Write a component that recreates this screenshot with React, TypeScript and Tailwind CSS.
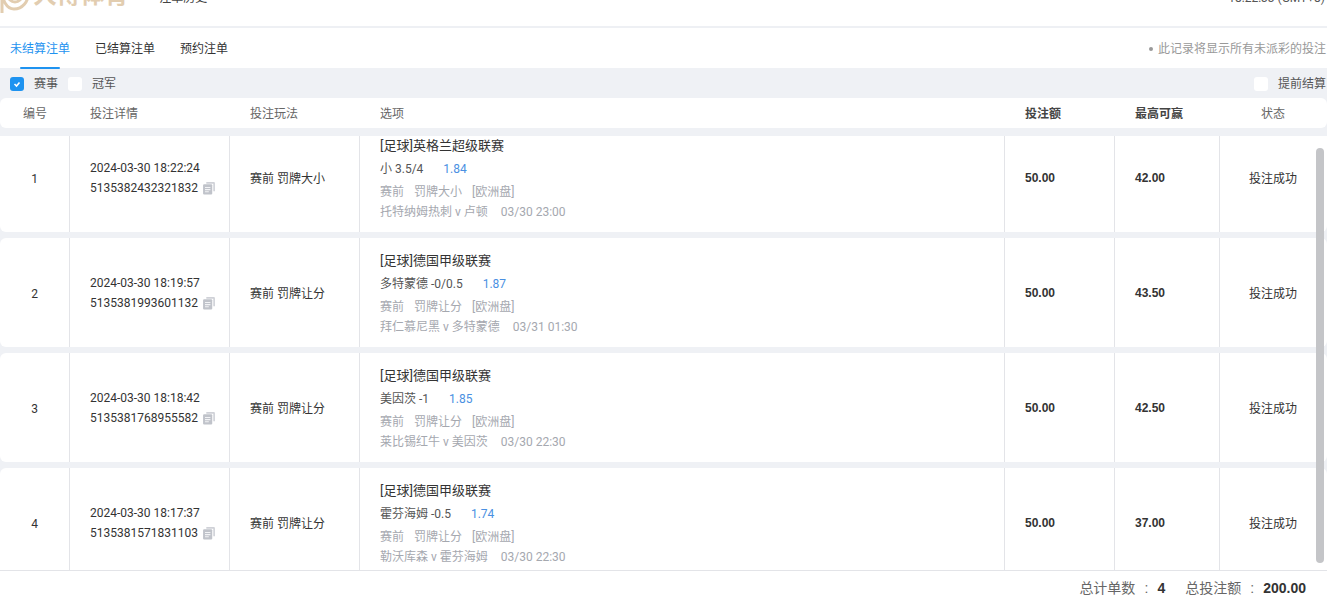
import React from "react";

const rows = [
  { n: 1, t: "2024-03-30 18:22:24", id: "5135382432321832", play: "赛前 罚牌大小", league: "[足球]英格兰超级联赛", pick: "小 3.5/4", odds: "1.84", sub: "罚牌大小", match: "托特纳姆热刺 v 卢顿", date: "03/30 23:00", win: "42.00" },
  { n: 2, t: "2024-03-30 18:19:57", id: "5135381993601132", play: "赛前 罚牌让分", league: "[足球]德国甲级联赛", pick: "多特蒙德 -0/0.5", odds: "1.87", sub: "罚牌让分", match: "拜仁慕尼黑 v 多特蒙德", date: "03/31 01:30", win: "43.50" },
  { n: 3, t: "2024-03-30 18:18:42", id: "5135381768955582", play: "赛前 罚牌让分", league: "[足球]德国甲级联赛", pick: "美因茨 -1", odds: "1.85", sub: "罚牌让分", match: "莱比锡红牛 v 美因茨", date: "03/30 22:30", win: "42.50" },
  { n: 4, t: "2024-03-30 18:17:37", id: "5135381571831103", play: "赛前 罚牌让分", league: "[足球]德国甲级联赛", pick: "霍芬海姆 -0.5", odds: "1.74", sub: "罚牌让分", match: "勒沃库森 v 霍芬海姆", date: "03/30 22:30", win: "37.00" },
];

const Copy = () => (
  <svg width="14" height="14" viewBox="0 0 13 13" className="ml-[4px] shrink-0">
    <path d="M4 1h7a1 1 0 0 1 1 1v7.5h-1.5V2.5H4z" fill="#cfd1d7" />
    <rect x="1" y="3" width="8.5" height="9.5" rx="1" fill="#c0c3ca" />
    <path d="M2.8 6h5M2.8 8h5M2.8 10h3.5" stroke="#f2f3f5" strokeWidth="1" />
  </svg>
);

const Check = ({ on }: { on?: boolean }) => (
  <span className={`flex h-[14px] w-[14px] items-center justify-center rounded-[3px] ${on ? "bg-[#1e93f0]" : "bg-white"}`}>
    {on && (
      <svg width="10" height="10" viewBox="0 0 10 10">
        <path d="M2.5 5l2 2 3-3.6" fill="none" stroke="#fff" strokeWidth="1.6" />
      </svg>
    )}
  </span>
);

export default function App() {
  return (
    <div className="flex h-[600px] w-[1327px] flex-col overflow-hidden bg-white text-[12px] leading-none text-[#333] [font-family:Roboto,'Noto_Sans_CJK_SC',sans-serif]">
      <header className="flex h-[28px] shrink-0 items-start justify-between overflow-hidden border-b-2 border-[#eef0f4]">
        <div className="flex items-start">
          <svg width="32" height="40" viewBox="0 0 32 40" className="-ml-[2px] -mt-[25px] shrink-0">
            <path d="M4 12v26M4 14c0 12 5 20 12 20 9 0 14-8 14-14" fill="none" stroke="#e2cdb0" strokeWidth="3" />
            <circle cx="17" cy="20" r="7" fill="none" stroke="#e2cdb0" strokeWidth="3" />
          </svg>
          <span className="-mt-[17px] ml-[3px] whitespace-nowrap text-[24px] font-bold leading-[24px] tracking-[-0.2px] text-[#e2cdb0]">大博体育</span>
          <span className="-mt-[8px] ml-[31px] whitespace-nowrap text-[12px] text-[#444]">注单历史</span>
        </div>
        <span className="-mt-[8px] mr-[2px] whitespace-nowrap text-[#555]">18:22:33 (GMT+8)</span>
      </header>

      <nav className="relative flex h-[40px] shrink-0 items-center justify-between pl-[10px] pt-[2px]">
        <div className="flex gap-[25px]">
          <span className="relative text-[#1e93f0]">
            未结算注单
            <span className="absolute left-[10px] top-[24px] h-[2px] w-[40px] rounded-sm bg-[#1e93f0]" />
          </span>
          <span>已结算注单</span>
          <span>预约注单</span>
        </div>
        <span className="flex items-center whitespace-nowrap pr-[1px] text-[#999]">
          <span className="mr-[5px] h-[4px] w-[4px] rounded-full bg-[#999]" />
          此记录将显示所有未派彩的投注
        </span>
      </nav>

      <div className="flex min-h-0 flex-1 flex-col bg-[#eff1f5]">
        <div className="flex h-[30px] shrink-0 items-center justify-between pl-[10px] pt-[2px]">
          <div className="flex items-center text-[#555]">
            <Check on />
            <span className="ml-[10px]">赛事</span>
            <span className="ml-[10px]"><Check /></span>
            <span className="ml-[10px]">冠军</span>
          </div>
          <div className="flex items-center pr-[1px] text-[#555]">
            <Check />
            <span className="ml-[10px]">提前结算</span>
          </div>
        </div>

        <div className="flex h-[30px] shrink-0 items-center rounded-[6px] bg-white pt-[1px] text-[#666]">
          <div className="w-[70px] text-center">编号</div>
          <div className="w-[160px] pl-[20px]">投注详情</div>
          <div className="w-[130px] pl-[20px]">投注玩法</div>
          <div className="w-[645px] pl-[20px]">选项</div>
          <div className="w-[110px] pl-[20px] font-bold text-[#444]">投注额</div>
          <div className="w-[105px] pl-[20px] font-bold text-[#444]">最高可赢</div>
          <div className="flex-1 pr-[1px] text-center">状态</div>
        </div>

        <div className="relative mt-[8px] min-h-0 flex-1 overflow-hidden">
          <div className="-mt-[13px] flex flex-col gap-[6px]">
            {rows.map((r) => (
              <div key={r.n} className="flex h-[109px] shrink-0 items-stretch rounded-[6px] bg-white">
                <div className="flex w-[70px] items-center justify-center border-r border-[#e3e4e8] pt-[2px]">{r.n}</div>
                <div className="flex w-[160px] flex-col justify-center gap-[8px] border-r border-[#e3e4e8] pl-[20px] pt-[1px]">
                  <div>{r.t}</div>
                  <div className="flex h-[12px] items-center">{r.id}<Copy /></div>
                </div>
                <div className="flex w-[130px] items-center border-r border-[#e3e4e8] pl-[20px] pt-[2px] text-[#333]">{r.play}</div>
                <div className="flex w-[645px] flex-col justify-center border-r border-[#e3e4e8] pl-[20px] pt-[1px]">
                  <div className="text-[13px] text-[#333]">{r.league}</div>
                  <div className="mt-[11px] flex text-[#555]">
                    <span>{r.pick}</span>
                    <span className="ml-[20px] text-[#4a90e2]">{r.odds}</span>
                  </div>
                  <div className="mt-[11px] flex text-[#a5a8af]">
                    <span>赛前</span><span className="ml-[10px]">{r.sub}</span><span className="ml-[10px]">[欧洲盘]</span>
                  </div>
                  <div className="mt-[8px] flex text-[#a5a8af]">
                    <span>{r.match}</span><span className="ml-[13px]">{r.date}</span>
                  </div>
                </div>
                <div className="flex w-[110px] items-center border-r border-[#e3e4e8] pl-[20px] font-bold text-[#333] [font-family:'Liberation_Sans',sans-serif]">50.00</div>
                <div className="flex w-[105px] items-center border-r border-[#e3e4e8] pl-[20px] font-bold text-[#333] [font-family:'Liberation_Sans',sans-serif]">{r.win}</div>
                <div className="flex flex-1 items-center justify-center pr-[1px] pt-[2px]">投注成功</div>
              </div>
            ))}
          </div>
          <div className="absolute right-[3px] top-[12px] h-[415px] w-[8px] rounded bg-[#c4c5c8]" />
        </div>

        <footer className="flex h-[30px] shrink-0 items-center justify-end border-t border-[#e3e4e8] bg-white pr-[21px] pt-[4px] text-[14px] text-[#666]">
          <span>总计单数</span>
          <span className="w-[22px] text-center">:</span>
          <b className="text-[#333] [font-family:'Liberation_Sans',sans-serif]">4</b>
          <span className="ml-[20px]">总投注额</span>
          <span className="w-[22px] text-center">:</span>
          <b className="text-[#333] [font-family:'Liberation_Sans',sans-serif]">200.00</b>
        </footer>
      </div>
    </div>
  );
}
